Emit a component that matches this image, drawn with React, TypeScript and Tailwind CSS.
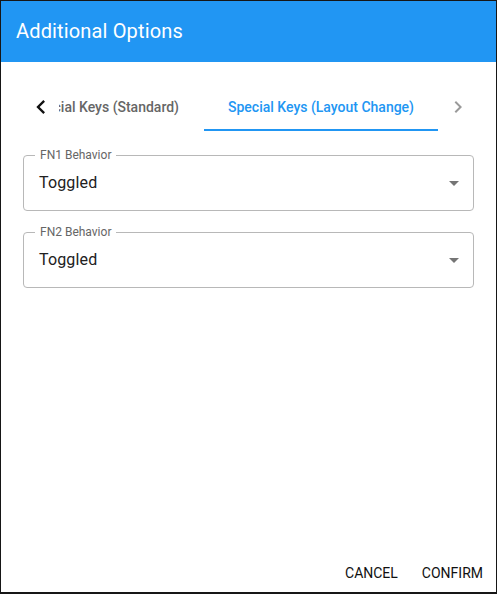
import React from "react";

const ArrowLeft = ({ className }: { className?: string }) => (
  <svg viewBox="0 0 24 24" className={className} fill="currentColor">
    <path d="M15.41 16.59L10.83 12l4.58-4.59L14 6l-6 6 6 6 1.41-1.41z" />
  </svg>
);

const ArrowRight = ({ className }: { className?: string }) => (
  <svg viewBox="0 0 24 24" className={className} fill="currentColor">
    <path d="M8.59 16.59L13.17 12 8.59 7.41 10 6l6 6-6 6-1.41-1.41z" />
  </svg>
);

const DropIcon = () => (
  <svg viewBox="0 0 24 24" className="w-6 h-6 text-[#757575]" fill="currentColor">
    <path d="M7 10l5 5 5-5z" />
  </svg>
);

function SelectField({ label, value }: { label: string; value: string }) {
  return (
    <div className="relative h-[56px] rounded border border-[#b8b8b8] flex items-center pl-[15px] pr-[7px]">
      <span className="absolute -top-[9px] left-[11px] bg-white px-[5px] text-[12px] text-[#666] leading-4">
        {label}
      </span>
      <span className="flex-1 text-[16px] text-[#212121] tracking-[0.15px]">{value}</span>
      <DropIcon />
    </div>
  );
}

export default function App() {
  return (
    <div
      className="w-[497px] h-[594px] flex flex-col bg-white border border-b-2 border-[#161616] overflow-hidden"
      style={{ fontFamily: "Roboto, 'Liberation Sans', sans-serif" }}
    >
      <div className="h-[61px] shrink-0 bg-[#2196f3] flex items-center px-[15px]">
        <h1 className="text-white text-[20px] font-normal tracking-[0.15px] -mt-[2px]">Additional Options</h1>
      </div>

      <div className="flex-1 flex flex-col">
        <div className="mt-[21px] ml-[21px] mr-[18px] flex h-[48px]">
          <button className="w-[37px] shrink-0 flex items-center justify-center text-[#111]">
            <ArrowLeft className="w-7 h-7" />
          </button>
          <div className="flex-1 overflow-hidden flex justify-end">
            <div className="shrink-0 pl-6 pr-[25px] flex items-center text-[14px] font-medium text-[#666] whitespace-nowrap">
              Special Keys (Standard)
            </div>
            <div className="shrink-0 relative px-6 flex items-center text-[14px] font-medium text-[#2196f3] whitespace-nowrap">
              Special Keys (Layout Change)
              <span className="absolute left-0 right-0 bottom-0 h-[2px] bg-[#2196f3]" />
            </div>
          </div>
          <button className="w-10 shrink-0 flex items-center justify-center text-[#9a9a9a]">
            <ArrowRight className="w-6 h-6" />
          </button>
        </div>

        <div className="mt-6 px-[22px] flex flex-col gap-[21px]">
          <SelectField label="FN1 Behavior" value="Toggled" />
          <SelectField label="FN2 Behavior" value="Toggled" />
        </div>
      </div>

      <div className="flex justify-end gap-2 px-[5px] pb-[1px]">
        <button className="h-9 px-2 min-w-16 text-[14px] font-normal text-[#111] uppercase">
          Cancel
        </button>
        <button className="h-9 px-2 min-w-16 text-[14px] font-normal text-[#111] uppercase">
          Confirm
        </button>
      </div>
    </div>
  );
}
